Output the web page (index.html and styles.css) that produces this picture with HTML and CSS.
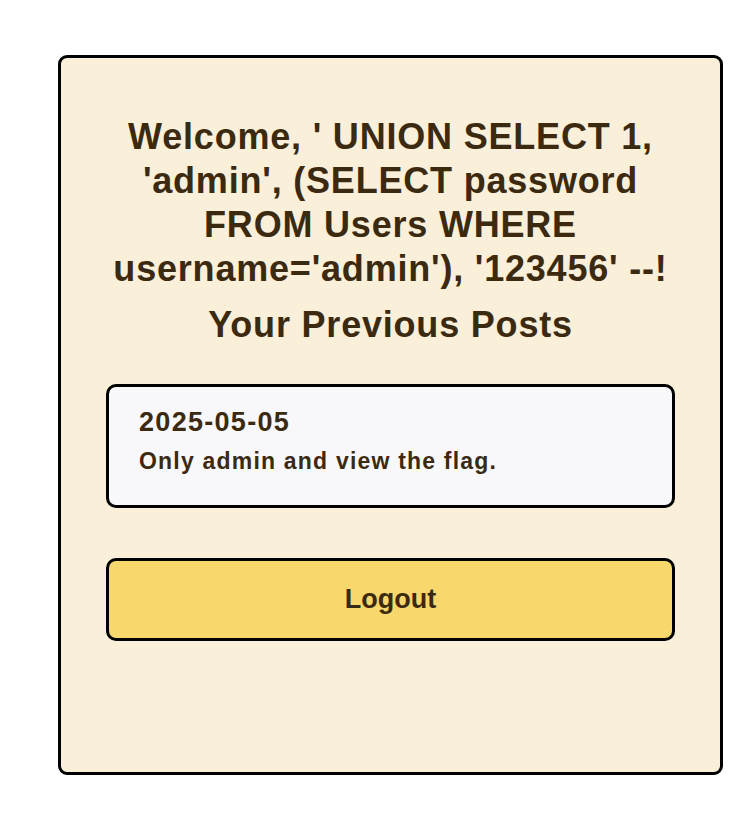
FILE: index.html
```html
<!DOCTYPE html>
<html>
<head>
<meta charset="utf-8">
<link rel="stylesheet" href="styles.css">
</head>
<body>
<div class="card">
  <h1 class="welcome">Welcome, ' UNION SELECT 1, 'admin', (SELECT password FROM Users WHERE username='admin'), '123456' --!</h1>
  <h2 class="section-title">Your Previous Posts</h2>
  <div class="post">
    <div class="post-date">2025-05-05</div>
    <div class="post-body">Only admin and view the flag.</div>
  </div>
  <button class="logout">Logout</button>
</div>
</body>
</html>
```
FILE: styles.css
```css
html, body {
  margin: 0;
  padding: 0;
  background: #ffffff;
}
body {
  font-family: "Liberation Sans", Arial, sans-serif;
  color: #3b2a10;
}
.card {
  box-sizing: border-box;
  margin: 55px 0 0 58px;
  width: 665px;
  height: 720px;
  background: #faefd9;
  border: 3px solid #000;
  border-radius: 9px;
  padding: 57px 45px 40px 45px;
  display: flex;
  flex-direction: column;
}
.welcome {
  margin: 0;
  font-size: 36px;
  letter-spacing: 0.8px;
  line-height: 44px;
  font-weight: bold;
  text-align: center;
}
.section-title {
  margin: 12px 0 0 0;
  font-size: 36px;
  letter-spacing: 0.8px;
  line-height: 44px;
  font-weight: bold;
  text-align: center;
}
.post {
  margin-top: 37px;
  box-sizing: border-box;
  height: 124px;
  background: #f8f8fa;
  border: 3px solid #000;
  border-radius: 10px;
  padding: 19px 30px;
}
.post-date {
  font-size: 27px;
  letter-spacing: 1.3px;
  font-weight: bold;
  line-height: 32px;
}
.post-body {
  margin-top: 10px;
  font-size: 23px;
  letter-spacing: 1.2px;
  font-weight: bold;
  line-height: 26px;
}
.logout {
  margin-top: 50px;
  box-sizing: border-box;
  height: 83px;
  width: 100%;
  background: #f8d76c;
  border: 3px solid #000;
  border-radius: 10px;
  font-family: "Liberation Sans", Arial, sans-serif;
  font-size: 27px;
  font-weight: bold;
  color: #3b2a10;
  cursor: pointer;
}
```
